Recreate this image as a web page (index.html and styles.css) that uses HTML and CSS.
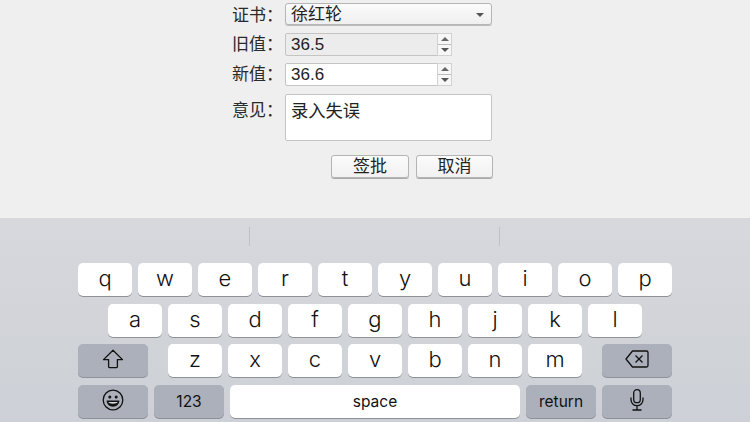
FILE: index.html
```html
<!DOCTYPE html>
<html lang="zh">
<head>
<meta charset="utf-8">
<title>签批</title>
<link rel="stylesheet" href="styles.css">
</head>
<body>
<main class="panel">
  <form class="form">
    <div class="row row-select">
      <span class="label">证书<span class="colon">：</span></span>
      <div class="field select"><span>徐红轮</span><i class="caret"></i></div>
    </div>
    <div class="row row-num">
      <span class="label">旧值<span class="colon">：</span></span>
      <div class="field num disabled"><span class="val">36.5</span>
        <div class="spin"><b class="up"><i></i></b><b class="down"><i></i></b></div></div>
    </div>
    <div class="row row-num">
      <span class="label">新值<span class="colon">：</span></span>
      <div class="field num"><span class="val">36.6</span>
        <div class="spin"><b class="up"><i></i></b><b class="down"><i></i></b></div></div>
    </div>
    <div class="row row-area">
      <span class="label">意见<span class="colon">：</span></span>
      <div class="field area">录入失误</div>
    </div>
    <div class="actions">
      <div class="btn">签批</div>
      <div class="btn btn-cancel">取消</div>
    </div>
  </form>
</main>
<section class="kbd">
  <div class="suggest"><i></i><i></i></div>
  <div class="krow"><div class="key">q</div><div class="key">w</div><div class="key">e</div><div class="key">r</div><div class="key">t</div><div class="key">y</div><div class="key">u</div><div class="key">i</div><div class="key">o</div><div class="key">p</div></div>
  <div class="krow"><div class="key">a</div><div class="key">s</div><div class="key">d</div><div class="key">f</div><div class="key">g</div><div class="key">h</div><div class="key">j</div><div class="key">k</div><div class="key">l</div></div>
  <div class="krow between">
    <div class="key fn wide"><svg width="22" height="20" viewBox="0 0 22 20"><path d="M11 1.2 1.5 10.6H6.6V17.8a.8.8 0 0 0 .8.8h7.2a.8.8 0 0 0 .8-.8V10.6h5.1Z" fill="none" stroke="#111" stroke-width="1.3" stroke-linejoin="round"/></svg></div>
    <div class="letters"><div class="key">z</div><div class="key">x</div><div class="key">c</div><div class="key">v</div><div class="key">b</div><div class="key">n</div><div class="key">m</div></div>
    <div class="key fn wide"><svg width="24" height="18" viewBox="0 0 24 18"><path d="M7.5 1h14a1.5 1.5 0 0 1 1.5 1.5v13a1.5 1.5 0 0 1-1.5 1.500h-14L1 9Z" fill="none" stroke="#111" stroke-width="1.3" stroke-linejoin="round"/><path d="M10.500 5.500l7 7m0-7-7 7" fill="none" stroke="#111" stroke-width="1.3"/></svg></div>
  </div>
  <div class="krow">
    <div class="key fn wide"><svg width="22" height="22" viewBox="0 0 22 22"><circle cx="11" cy="11" r="9.800" fill="none" stroke="#111" stroke-width="1.300"/><circle cx="7.800" cy="8" r="1.500" fill="#111"/><circle cx="14.200" cy="8" r="1.500" fill="#111"/><path d="M4.600 11.600h12.800c0 3.600-2.900 6.200-6.400 6.200s-6.400-2.600-6.400-6.200Z" fill="#111"/><path d="M6.300 13h9.400c-.5 1.200-2.200 1.700-4.700 1.700S6.800 14.200 6.300 13Z" fill="#d5d7dc"/></svg></div>
    <div class="key fn wide small">123</div>
    <div class="key space small">space</div>
    <div class="key fn wide small">return</div>
    <div class="key fn wide"><svg width="14" height="22" viewBox="0 0 14 22"><rect x="3.700" y=".7" width="6.600" height="13" rx="3.300" fill="none" stroke="#111" stroke-width="1.300"/><path d="M1 8.500v2.200a6 6 0 0 0 12 0V8.500M7 16.700v3.600M2.500 21h9" fill="none" stroke="#111" stroke-width="1.300"/></svg></div>
  </div>
</section>
</body>
</html>
```
FILE: styles.css
```css
* { box-sizing: border-box; }
html, body { margin: 0; padding: 0; }
body {
  width: 750px;
  height: 422px;
  overflow: hidden;
  background: #efefef;
  font-family: "Liberation Sans", "Noto Sans CJK SC", sans-serif;
  color: #222;
}
.panel { height: 218px; padding: 3px 0 0 232px; }
.form { width: 261px; display: flex; flex-direction: column; }
.row { display: flex; margin-bottom: 7px; }
.row-select { margin-bottom: 8px; }
.label { width: 53px; height: 23px; padding-top: 1px; flex: none; font-size: 17px; line-height: 22px; color: #2a2a2a; white-space: nowrap; }
.row-select .label { padding-top: 2px; height: 22px; }
.colon { font-family: "Noto Sans CJK TC", sans-serif; line-height: 1; }
.field {
  border: 1px solid #c4c4c4;
  border-radius: 2px;
  background: #fff;
  font-size: 17px;
  color: #222;
}
.select {
  width: 207px; height: 22px;
  display: flex; align-items: center; justify-content: space-between;
  padding: 2px 7px 0 5px;
  border-color: #b5b5b5;
  border-radius: 3px;
  background: linear-gradient(#fbfbfb, #efefef);
  box-shadow: 0 1px 0 #bbb;
  line-height: 20px;
}
.caret { border: 4px solid transparent; border-top: 4.500px solid #555; border-bottom: 0; width: 0; height: 0; }
.num { width: 167px; height: 23px; display: flex; justify-content: space-between; padding-left: 5px; line-height: 21px; }
.disabled { background: #ececec; }
.spin { width: 15px; margin: -1px -1px -1px 0; display: flex; flex-direction: column; border: 1px solid #d2d2d2; background: #f7f7f7; }
.spin b { flex: 1; display: flex; align-items: center; justify-content: center; }
.spin .up { border-bottom: 1px solid #bcbcbc; }
.up i { border: 4px solid transparent; border-bottom: 4px solid #666; border-top: 0; }
.down i { border: 4px solid transparent; border-top: 4px solid #555; border-bottom: 0; }
.row-area { margin: 1px 0 0; }
.area { width: 207px; height: 47px; padding: 6px 5px; line-height: 20px; font-size: 17.300px; }
.row-area .label { padding-top: 6px; height: 32px; }
.actions { display: flex; justify-content: flex-end; gap: 7px; margin-top: 14px; }
.btn {
  width: 78px; height: 23px;
  border: 1px solid #b4b4b4;
  border-radius: 3px;
  background: linear-gradient(#fbfbfb, #f1f1f1);
  box-shadow: 0 1px 0 #aaa;
  font-size: 17px; line-height: 21px; text-align: center; color: #222;
}
.btn-cancel { width: 77px; }
.kbd {
  height: 204px;
  padding: 0 78px;
  background: linear-gradient(#d6d8dc, #cdd0d6);
  font-family: Inter, "Liberation Sans", sans-serif;
  color: #111;
}
.suggest { height: 45px; padding-top: 9px; display: flex; }
.suggest i { width: 1px; height: 19px; background: #bfc1c6; }
.suggest i:first-child { margin-left: 171px; }
.suggest i:last-child { margin-left: 249px; }
.krow { display: flex; justify-content: center; gap: 6px; margin-bottom: 7.670px; }
.krow.between { justify-content: space-between; }
.letters { display: flex; gap: 6px; }
.key {
  width: 54px; height: 33px;
  border-radius: 5px;
  background: #fff;
  box-shadow: 0 1px 0 #8e9197;
  display: flex; align-items: center; justify-content: center;
  font-size: 22px; font-weight: 300;
  padding-bottom: 3px;
}
.fn { background: #abb0ba; }
.wide { width: 70px; }
.space { width: 290px; }
.small { font-size: 15.500px; padding-bottom: 0; font-weight: 400; }
```
